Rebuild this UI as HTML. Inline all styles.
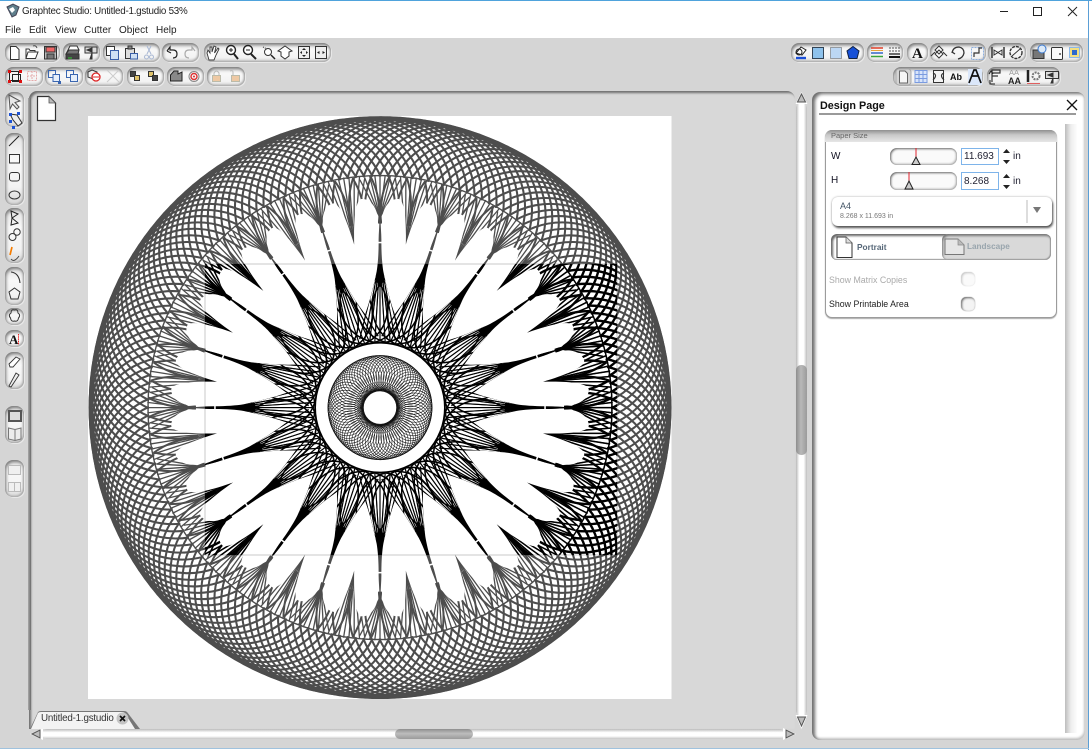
<!DOCTYPE html>
<html><head><meta charset="utf-8">
<style>
html,body{margin:0;padding:0;width:1092px;height:750px;overflow:hidden;background:#fff}
body{font-family:"Liberation Sans",sans-serif;color:#222}
#w{position:relative;width:1092px;height:750px;overflow:hidden}
svg{display:block}
.a{position:absolute}
.t{position:absolute;white-space:nowrap;line-height:1}
.p{position:absolute;border-radius:8px;background:linear-gradient(#e2e2e2,#f8f8f8 35%,#f3f3f3 75%,#d6d6d6);box-shadow:inset 1px 2px 3px #777,inset -1px -1px 2px #a8a8a8,1px 1px 0 #e8e8e8;box-sizing:border-box}
.hb{position:absolute;border-radius:6px;background:linear-gradient(90deg,#b8b8b8,#fff 30%,#fff 70%,#bdbdbd)}
</style></head><body><div id="w">
<div class="a" style="left:0;top:0;width:1092px;height:1px;background:#4fa3dc"></div>
<div class="a" style="left:0;top:38px;width:1088px;height:710px;background:#d5d5d5"></div>
<div class="a" style="left:1088px;top:0;width:1px;height:750px;background:#5b9fd6"></div>
<div class="a" style="left:0;top:748px;width:1089px;height:1px;background:#9fc2de"></div>

<div class="t" style="left:22px;top:7px;font-size:9.8px;letter-spacing:-.24px">Graphtec Studio: Untitled-1.gstudio 53%</div>
<div class="t" style="left:5px;top:26px;font-size:10px">File</div>
<div class="t" style="left:29px;top:26px;font-size:10px">Edit</div>
<div class="t" style="left:55px;top:26px;font-size:10px">View</div>
<div class="t" style="left:84px;top:26px;font-size:10px">Cutter</div>
<div class="t" style="left:119px;top:26px;font-size:10px">Object</div>
<div class="t" style="left:156px;top:26px;font-size:10px">Help</div>

<!-- toolbar pills -->
<div class="p" style="left:5px;top:43px;width:55px;height:19px"></div>
<div class="p" style="left:63px;top:43px;width:37px;height:19px"></div>
<div class="p" style="left:103px;top:43px;width:57px;height:19px"></div>
<div class="p" style="left:162px;top:43px;width:37px;height:19px"></div>
<div class="p" style="left:204px;top:43px;width:127px;height:19px"></div>
<div class="p" style="left:5px;top:67px;width:38px;height:19px"></div>
<div class="p" style="left:45px;top:67px;width:38px;height:19px"></div>
<div class="p" style="left:85px;top:67px;width:38px;height:19px"></div>
<div class="p" style="left:127px;top:67px;width:37px;height:19px"></div>
<div class="p" style="left:167px;top:67px;width:37px;height:19px"></div>
<div class="p" style="left:207px;top:67px;width:38px;height:19px"></div>
<div class="p" style="left:791px;top:43px;width:73px;height:19px"></div>
<div class="p" style="left:867px;top:43px;width:36px;height:19px"></div>
<div class="p" style="left:907px;top:43px;width:21px;height:19px"></div>
<div class="p" style="left:930px;top:43px;width:56px;height:19px"></div>
<div class="p" style="left:988px;top:43px;width:38px;height:19px"></div>
<div class="p" style="left:1030px;top:43px;width:53px;height:19px"></div>
<div class="p" style="left:893px;top:67px;width:90px;height:19px"></div>
<div class="p" style="left:987px;top:67px;width:73px;height:19px"></div>
<!-- left tool pills -->
<div class="p" style="left:5px;top:92px;width:19px;height:35px"></div>
<div class="p" style="left:5px;top:133px;width:19px;height:72px"></div>
<div class="p" style="left:5px;top:208px;width:19px;height:55px"></div>
<div class="p" style="left:5px;top:267px;width:19px;height:38px"></div>
<div class="p" style="left:5px;top:308px;width:19px;height:17px"></div>
<div class="p" style="left:5px;top:330px;width:19px;height:17px"></div>
<div class="p" style="left:5px;top:352px;width:19px;height:37px"></div>
<div class="p" style="left:5px;top:406px;width:19px;height:37px"></div>
<div class="p" style="left:5px;top:460px;width:19px;height:37px"></div>

<!-- canvas frame -->
<div class="a" style="left:29px;top:91px;width:766px;height:638px;background:#d8d8d8;border-radius:8px 8px 0 0;box-shadow:inset 2px 2px 2px #6e6e6e;"></div>
<div class="a" style="left:28px;top:98px;width:3px;height:612px;background:linear-gradient(90deg,#aaa,#6a6a6a)"></div>

<!-- spirograph page -->
<svg class="a" style="left:0;top:0" width="1092" height="750" viewBox="0 0 1092 750">
<defs>
<clipPath id="cl"><rect x="205" y="264" width="412" height="291"/></clipPath>
<path id="a1" d="M-79.75,-216.8A80 80 0 0 1 79.75,-216.8" fill="none" style="stroke-width:calc(var(--k)*2.05)"/>
<g id="a3"><use href="#a1"/><use href="#a1" transform="rotate(2)"/><use href="#a1" transform="rotate(4)"/></g>
<g id="a9"><use href="#a3"/><use href="#a3" transform="rotate(6)"/><use href="#a3" transform="rotate(12)"/></g>
<g id="a4"><use href="#a9"/><use href="#a9" transform="rotate(18)"/><use href="#a9" transform="rotate(36)"/><use href="#a9" transform="rotate(54)"/></g>
<g id="a20"><use href="#a4"/><use href="#a4" transform="rotate(72)"/><use href="#a4" transform="rotate(144)"/><use href="#a4" transform="rotate(216)"/><use href="#a4" transform="rotate(288)"/></g>

<path id="b1" d="M79.75,-216.8A80 80 0 0 1 69.3,-170.5M-69.3,-170.5A80 80 0 0 1 -79.75,-216.8" fill="none" style="stroke-width:calc(var(--k)*2)"/>
<g id="b3"><use href="#b1"/><use href="#b1" transform="rotate(4.5)"/><use href="#b1" transform="rotate(9)"/><use href="#b1" transform="rotate(13.5)"/></g>
<g id="b4"><use href="#b3"/><use href="#b3" transform="rotate(18)"/><use href="#b3" transform="rotate(36)"/><use href="#b3" transform="rotate(54)"/></g>
<g id="b20"><use href="#b4"/><use href="#b4" transform="rotate(72)"/><use href="#b4" transform="rotate(144)"/><use href="#b4" transform="rotate(216)"/><use href="#b4" transform="rotate(288)"/></g>

<line id="n" x1="0" y1="-165" x2="0" y2="-233" fill="none" style="stroke-width:calc(var(--k)*1.3)"/>
<line id="d" x1="0" y1="-190" x2="0" y2="-233" fill="none" style="stroke-width:calc(var(--k)*1.3)"/>
<line id="sp" x1="0" y1="-150" x2="0" y2="-66" style="stroke-width:1.1"/>
<g id="f1">
 <g transform="rotate(9)">
  <use href="#n" transform="rotate(-18 0 -165)"/><use href="#n" transform="rotate(-13.5 0 -165)"/><use href="#n" transform="rotate(-9 0 -165)"/><use href="#n" transform="rotate(-4.5 0 -165)"/><use href="#n"/><use href="#n" transform="rotate(4.5 0 -165)"/><use href="#n" transform="rotate(9 0 -165)"/><use href="#n" transform="rotate(13.5 0 -165)"/><use href="#n" transform="rotate(18 0 -165)"/>
 </g>
 <use href="#d" transform="rotate(-28 0 -190)"/><use href="#d" transform="rotate(-21 0 -190)"/><use href="#d" transform="rotate(-14 0 -190)"/><use href="#d" transform="rotate(-7 0 -190)"/><use href="#d"/><use href="#d" transform="rotate(7 0 -190)"/><use href="#d" transform="rotate(14 0 -190)"/><use href="#d" transform="rotate(21 0 -190)"/><use href="#d" transform="rotate(28 0 -190)"/>
</g>
<g id="f4"><use href="#f1"/><use href="#f1" transform="rotate(18)"/><use href="#f1" transform="rotate(36)"/><use href="#f1" transform="rotate(54)"/></g>
<g id="f20"><use href="#f4"/><use href="#f4" transform="rotate(72)"/><use href="#f4" transform="rotate(144)"/><use href="#f4" transform="rotate(216)"/><use href="#f4" transform="rotate(288)"/></g>

<g id="s1">
 <path d="M0,-196 L1.500,-168 L3.500,-135 L4.500,-125 L-4.500,-125 L-3.500,-135 L-1.500,-168Z" fill="currentColor" stroke="none"/>
 <use href="#sp" transform="rotate(-14 0 -150)"/><use href="#sp" transform="rotate(-10.500 0 -150)"/><use href="#sp" transform="rotate(-7 0 -150)"/><use href="#sp" transform="rotate(-3.500 0 -150)"/><use href="#sp"/><use href="#sp" transform="rotate(3.500 0 -150)"/><use href="#sp" transform="rotate(7 0 -150)"/><use href="#sp" transform="rotate(10.500 0 -150)"/><use href="#sp" transform="rotate(14 0 -150)"/>
 <circle cy="-105" r="40" fill="none" stroke-width="1.400"/>
 <circle cy="-105" r="40" fill="none" stroke-width="1.400" transform="rotate(9)"/>
</g>
<g id="s4"><use href="#s1"/><use href="#s1" transform="rotate(18)"/><use href="#s1" transform="rotate(36)"/><use href="#s1" transform="rotate(54)"/></g>
<g id="s20"><use href="#s4"/><use href="#s4" transform="rotate(72)"/><use href="#s4" transform="rotate(144)"/><use href="#s4" transform="rotate(216)"/><use href="#s4" transform="rotate(288)"/></g>

<g id="h1">
 <path transform="rotate(9)" fill="#fff" stroke="none" d="M0,-95 C6,-105 13,-122 18,-135 C21,-144 24,-158 25.700,-172 C26.500,-180 27.500,-186 27.500,-190 C27.500,-200 22,-208 15,-209 C8,-210 3,-188 0,-165 C-3,-188 -8,-210 -15,-209 C-22,-208 -27.500,-200 -27.500,-190 C-27.500,-186 -26.500,-180 -25.700,-172 C-24,-158 -21,-144 -18,-135 C-13,-122 -6,-105 0,-95Z"/>
 <rect x="-3" y="-165.800" width="6" height="1.500" fill="#fff" stroke="none"/>
</g>
<g id="h4"><use href="#h1"/><use href="#h1" transform="rotate(18)"/><use href="#h1" transform="rotate(36)"/><use href="#h1" transform="rotate(54)"/></g>
<g id="h20"><use href="#h4"/><use href="#h4" transform="rotate(72)"/><use href="#h4" transform="rotate(144)"/><use href="#h4" transform="rotate(216)"/><use href="#h4" transform="rotate(288)"/></g>

<g id="m1"><circle cy="-34.800" r="17.400" fill="none" stroke-width=".55"/><circle cy="-34.800" r="17.400" fill="none" stroke-width=".55" transform="rotate(4.500)"/><circle cy="-34.800" r="17.400" fill="none" stroke-width=".55" transform="rotate(9)"/><circle cy="-34.800" r="17.400" fill="none" stroke-width=".55" transform="rotate(13.500)"/></g>
<g id="m4"><use href="#m1"/><use href="#m1" transform="rotate(18)"/><use href="#m1" transform="rotate(36)"/><use href="#m1" transform="rotate(54)"/></g>
<g id="m20"><use href="#m4"/><use href="#m4" transform="rotate(72)"/><use href="#m4" transform="rotate(144)"/><use href="#m4" transform="rotate(216)"/><use href="#m4" transform="rotate(288)"/></g>

<g id="all" transform="translate(380 407.6)">
 <use href="#a20"/>
 <circle r="289" fill="none" stroke-width="3.500"/>
 <use href="#b20"/>
 <circle r="232" fill="none" stroke-width="1.400"/>
 <use href="#f20"/>
 <use href="#s20"/>
 <use href="#h20"/>
 <circle r="64.500" fill="#fff" stroke="#000" stroke-width="1"/>
 <g stroke="#111"><use href="#m20"/></g>
 <circle r="16.800" fill="#fff" stroke="#111" stroke-width="1"/>
</g>
</defs>
<rect x="88" y="116" width="583.500" height="583" fill="#fff"/>
<clipPath id="pg"><rect x="88" y="116" width="583.500" height="583"/></clipPath>
<g clip-path="url(#pg)">
 <g style="--k:1;color:#4d4d4d;stroke:#4d4d4d"><use href="#all"/></g>
 <g clip-path="url(#cl)" style="--k:1.150;color:#000;stroke:#000"><use href="#all"/></g>
 <rect x="205" y="264" width="412" height="291" fill="none" stroke="#c8c8c8" stroke-width="1" style="mix-blend-mode:multiply"/>
</g>
</svg>

<!-- canvas doc icon -->
<svg class="a" style="left:36px;top:95px" width="22" height="28" viewBox="0 0 22 28"><path d="M1.500 1.500H13L19.500 8V25.500H1.500Z" fill="#fff" stroke="#333" stroke-width="1.200"/><path d="M13 1.500V8H19.500Z" fill="#bbb" stroke="#555" stroke-width=".8"/></svg>

<!-- vertical scrollbar -->
<div class="hb" style="left:796px;top:103px;width:11px;height:613px"></div>
<div class="a" style="left:796px;top:365px;width:11px;height:90px;border-radius:5px;background:linear-gradient(90deg,#8e8e8e,#b9b9b9 45%,#9b9b9b)"></div>
<svg class="a" style="left:794px;top:91px" width="15" height="14" viewBox="0 0 15 14"><path d="M7.500 1L13.500 13H1.500Z" fill="#fff"/><path d="M7.500 3L11.500 11H3.500Z" fill="#bdbdbd" stroke="#555"/></svg>
<svg class="a" style="left:794px;top:714px" width="15" height="16" viewBox="0 0 15 16"><path d="M1.500 1H13.500L7.500 15Z" fill="#fff"/><path d="M3.500 3H11.500L7.500 12Z" fill="#bdbdbd" stroke="#555"/></svg>

<!-- horizontal scrollbar -->
<div class="a" style="left:42px;top:729px;width:743px;height:10px;border-radius:5px;background:linear-gradient(#bbb,#fff 35%,#fff 70%,#c4c4c4)"></div>
<div class="a" style="left:395px;top:729px;width:78px;height:10px;border-radius:5px;background:linear-gradient(#8e8e8e,#bdbdbd 45%,#9b9b9b)"></div>
<svg class="a" style="left:29px;top:727px" width="15" height="14" viewBox="0 0 15 14"><path d="M1 7L14 1V13Z" fill="#fff"/><path d="M3 7L11 3V11Z" fill="#bdbdbd" stroke="#555"/></svg>
<svg class="a" style="left:782px;top:727px" width="15" height="14" viewBox="0 0 15 14"><path d="M14 7L1 1V13Z" fill="#fff"/><path d="M12 7L4 3V11Z" fill="#bdbdbd" stroke="#555"/></svg>

<!-- tab -->
<svg class="a" style="left:28px;top:709px" width="114" height="21" viewBox="0 0 114 21"><path d="M2 20L10 3Q11 2 13 2H96Q98 2 99 3L112 20Z" fill="#777"/><path d="M3 20L10 4Q11 3 13 3H94Q96 3 97 4L107 20Z" fill="#f3f3f3"/></svg>
<div class="t" style="left:41px;top:714px;font-size:9.800px;letter-spacing:-.2px;color:#333">Untitled-1.gstudio</div>
<svg class="a" style="left:116px;top:712px" width="13" height="13" viewBox="0 0 13 13"><circle cx="6.500" cy="6.500" r="6" fill="#c4c4c4"/><path d="M4 4L9 9M9 4L4 9" stroke="#111" stroke-width="1.700"/></svg>

<!-- right panel -->
<div class="a" style="left:812px;top:92px;width:273px;height:648px;background:#fff;border-radius:8px;box-shadow:inset 3px 2px 3px #6e6e6e,inset -1px -2px 2px #c4c4c4"></div>
<div class="t" style="left:820px;top:101px;font-size:10.800px;font-weight:bold;color:#111">Design Page</div>
<svg class="a" style="left:1065px;top:98px" width="14" height="14" viewBox="0 0 14 14"><path d="M2 2L12 12M12 2L2 12" stroke="#111" stroke-width="1.300"/></svg>
<div class="a" style="left:819px;top:113px;width:257px;height:2px;background:#9a9a9a"></div>
<div class="a" style="left:1065px;top:124px;width:12px;height:609px;background:linear-gradient(90deg,#bdbdbd,#eee 50%,#fdfdfd)"></div>

<!-- paper size group -->
<div class="a" style="left:825px;top:130px;width:232px;height:188px;border-radius:7px;border:1px solid #9c9c9c;box-sizing:border-box;background:#fff;box-shadow:0 1px 1px #aaa"></div>
<div class="a" style="left:825px;top:130px;width:232px;height:12px;border-radius:7px 7px 0 0;background:linear-gradient(#8f8f8f,#c8c8c8 40%,#e6e6e6)"></div>
<div class="t" style="left:831px;top:132px;font-size:7.500px;color:#666">Paper Size</div>

<div class="t" style="left:831px;top:152px;font-size:10px;color:#112">W</div>
<div class="t" style="left:831px;top:176px;font-size:10px;color:#112">H</div>
<div class="a" style="left:890px;top:148px;width:67px;height:17px;border-radius:7px;background:#fafafa;box-shadow:inset 1px 1px 2px #666,inset -1px -1px 2px #aaa"></div>
<div class="a" style="left:890px;top:172px;width:67px;height:18px;border-radius:7px;background:#fafafa;box-shadow:inset 1px 1px 2px #666,inset -1px -1px 2px #aaa"></div>
<svg class="a" style="left:890px;top:146px" width="70" height="46" viewBox="0 0 70 46">
<path d="M26 2V14" stroke="#e0242e"/><path d="M26 11L30 18.500H22Z" fill="#ccc" stroke="#222"/>
<path d="M19 26V38" stroke="#e0242e"/><path d="M19 35L23 43H15Z" fill="#ccc" stroke="#222"/></svg>
<div class="a" style="left:961px;top:148px;width:38px;height:17px;border:1px solid #7eb4ea;box-sizing:border-box;background:#fff"></div>
<div class="a" style="left:961px;top:172px;width:38px;height:18px;border:1px solid #7eb4ea;box-sizing:border-box;background:#fff"></div>
<div class="t" style="left:964px;top:152px;font-size:10px;color:#223">11.693</div>
<div class="t" style="left:964px;top:177px;font-size:10px;color:#223">8.268</div>
<svg class="a" style="left:1002px;top:148px" width="9" height="44" viewBox="0 0 9 44"><path d="M4.500 1L8 5H1ZM4.500 16L8 12H1ZM4.500 26L8 30H1ZM4.500 41L8 37H1Z" fill="#222"/></svg>
<div class="t" style="left:1013px;top:152px;font-size:10px;color:#223">in</div>
<div class="t" style="left:1013px;top:177px;font-size:10px;color:#223">in</div>

<div class="a" style="left:832px;top:197px;width:220px;height:29px;border-radius:6px;background:#fff;box-shadow:1px 2px 2px #555,0 0 2px #aaa"></div>
<div class="t" style="left:840px;top:202px;font-size:9px;color:#456">A4</div>
<div class="t" style="left:840px;top:213px;font-size:7px;color:#777">8.268 x 11.693 in</div>
<div class="a" style="left:1026px;top:200px;width:2px;height:23px;background:#ddd"></div>
<svg class="a" style="left:1032px;top:206px" width="10" height="8" viewBox="0 0 10 8"><path d="M1 1H9L5 7Z" fill="#777"/></svg>

<div class="a" style="left:831px;top:234px;width:220px;height:26px;border-radius:6px;background:#fff;box-shadow:inset 2px 2px 2px #666,inset -1px -1px 1px #999"></div>
<div class="a" style="left:942px;top:234px;width:109px;height:26px;border-radius:6px;background:#d9d9d9;box-shadow:inset 1px 2px 2px #777,inset -1px -1px 1px #999"></div>
<svg class="a" style="left:836px;top:236px" width="18" height="23" viewBox="0 0 18 23"><path d="M1 1H10L16 7V21.500H1Z" fill="#fff" stroke="#333"/><path d="M10 1V7H16" fill="#ddd" stroke="#555" stroke-width=".7"/></svg>
<svg class="a" style="left:944px;top:238px" width="22" height="18" viewBox="0 0 22 18"><path d="M1 1H14L20 7V16.500H1Z" fill="#e6e6e6" stroke="#777"/><path d="M14 1V7H20" fill="#bbb" stroke="#888" stroke-width=".7"/></svg>
<div class="t" style="left:857px;top:243px;font-size:8.300px;font-weight:bold;color:#567">Portrait</div>
<div class="t" style="left:967px;top:243px;font-size:8.200px;font-weight:bold;color:#99a5ad">Landscape</div>

<div class="t" style="left:829px;top:276px;font-size:8.800px;color:#aaa">Show Matrix Copies</div>
<div class="t" style="left:829px;top:300px;font-size:8.800px;color:#222">Show Printable Area</div>
<div class="a" style="left:961px;top:272px;width:14px;height:14px;border-radius:5px;background:#fafafa;box-shadow:inset 1px 1px 2px #c4c4c4,0 0 1px #ccc"></div>
<div class="a" style="left:961px;top:297px;width:14px;height:14px;border-radius:5px;background:#f4f4f4;box-shadow:inset 1px 1px 2px #666,0 0 1px #888"></div>

<!-- window controls + all icons -->
<svg class="a" style="left:0;top:0" width="1092" height="750" viewBox="0 0 1092 750" fill="none" stroke="#333" stroke-width="1" font-family="Liberation Serif,serif">
<path d="M1000 11.500H1008" stroke="#222"/><rect x="1033.500" y="7.500" width="8" height="8" stroke="#222"/><path d="M1068 7L1077 16M1077 7L1068 16" stroke="#222"/>
<!-- app icon -->
<path d="M7 7L13 4L19 7L16 15L12 17Z" fill="#5f7f8c" stroke="#445"/><path d="M9 9L13 7L15 10L12 13Z" fill="#fff" stroke="none"/>

<!-- row 1 left -->
<path d="M10.500 46.500H16L19 49.500V59.500H10.500Z" fill="#fff"/>
<path d="M26 58.500V49H29L30 50.500H35V52M26 58.500L28 52H38L35.500 58.500Z" fill="#fff"/><path d="M33 46Q36 45 37 48" stroke-width=".8"/>
<rect x="44.500" y="46.500" width="12" height="12.500" fill="#bbb"/><rect x="46" y="47" width="9" height="5" fill="#e66"/><rect x="47" y="54" width="7" height="5" fill="#777"/>
<path d="M66 54L70 46H77L79 50" fill="#fff"/><path d="M66 54H78L79 50H69Z" fill="#777"/><rect x="66" y="54" width="13" height="5" fill="#444"/><path d="M68 58H72" stroke="#3c3"/>
<rect x="85" y="47" width="12" height="6" fill="#ddd"/><path d="M87 50L92 48V52ZM92 53V59H90Z" fill="#333"/>
<rect x="106.500" y="46.500" width="8" height="9" fill="#fff"/><rect x="110.500" y="50.500" width="8" height="9" fill="#cfe0f4" stroke="#3a5fa8"/>
<rect x="125.500" y="48.500" width="9" height="10" fill="#ddd"/><rect x="128" y="46" width="4" height="3" fill="#888"/><rect x="130.500" y="53.500" width="7" height="5.500" fill="#cfe0f4" stroke="#3a5fa8"/>
<path d="M147 46L151 54M151 46L147 54" stroke="#a9b8d4"/><circle cx="146.500" cy="57" r="2" stroke="#a9b8d4"/><circle cx="151.500" cy="57" r="2" stroke="#a9b8d4"/>
<path d="M167 51L170 47V50H173Q177 50 177 54T173 58" stroke="#222" stroke-width="1.200"/><path d="M167 51L171 53" stroke="#222"/>
<path d="M195 51L192 47V50H189Q185 50 185 54T189 58" stroke="#aaa" stroke-width="1.200"/>
<path d="M209 60L207 53L208 50L210 53L210 47L212 47V52L214 46L216 47L214.500 53L218 48L219 49L216 55L214 60Z" fill="#fff" stroke-width=".9"/>
<circle cx="231" cy="50" r="4.500" fill="#fff" stroke="#222" stroke-width="1.400"/><path d="M234 54L238 59" stroke="#222" stroke-width="2"/><path d="M229 50H233M231 48V52" stroke="#222"/>
<circle cx="248" cy="50" r="4.500" fill="#fff" stroke="#222" stroke-width="1.400"/><path d="M251 54L256 59" stroke="#222" stroke-width="2"/><path d="M246 50H250" stroke="#222"/>
<circle cx="268" cy="52" r="3.500" fill="#fff" stroke="#333"/><path d="M271 55L275 59" stroke="#222" stroke-width="1.500"/><path d="M263 47L267 49" stroke-dasharray="1 1"/>
<path d="M285 46L292 51L289 52V56L285 59L281 56V52L278 51Z" fill="#fff"/>
<rect x="298.500" y="46.500" width="11" height="12" fill="#eee"/><path d="M304 48L306 50H302ZM304 57L306 55H302ZM300 52.500L302 51V54ZM308 52.500L306 51V54Z" fill="#222" stroke="none"/>
<rect x="315.500" y="46.500" width="11" height="12" fill="#eee"/><path d="M317 52.500L319.500 51V54ZM325 52.500L322.500 51V54Z" fill="#222" stroke="none"/>

<!-- row 2 left -->
<rect x="9.500" y="71.500" width="9" height="9" stroke="#222"/><rect x="12.500" y="74.500" width="8" height="7" stroke="#222"/><path d="M8 70h3v3h-3zM19 70h3v3h-3zM8 80h3v3h-3zM19 80h3v3h-3z" fill="#d11" stroke="none"/>
<rect x="27.500" y="71.500" width="9" height="9" stroke="#e4a9a9" stroke-dasharray="2 1"/><path d="M32 71V81M27 76H37" stroke="#e4a9a9" stroke-dasharray="2 1"/>
<path d="M48.500 70.500H55.500V77.500H48.500Z" stroke="#3a66b0"/><path d="M53 74.500H59.500V81.500H53Z" stroke="#3a66b0" fill="#e7effa"/><path d="M58 81h3v3h-3z" fill="#3a66b0" stroke="none"/>
<rect x="66.500" y="70.500" width="7" height="7" stroke="#3a66b0"/><rect x="70.500" y="74.500" width="7" height="7" stroke="#3a66b0" fill="#e7effa"/>
<path d="M88 72L92 70L97 72V77L93 79L88 77Z" fill="#eee"/><circle cx="96" cy="77" r="4" fill="#fff" stroke="#d22" stroke-width="1.300"/><path d="M93 77H99" stroke="#d22"/>
<path d="M107 70L119 82M119 70L107 82" stroke="#ccc"/>
<rect x="130.500" y="71.500" width="5" height="5" fill="#444"/><rect x="134.500" y="75.500" width="5" height="5" fill="#dfc36b"/>
<rect x="148.500" y="71.500" width="5" height="5" fill="#dfc36b"/><rect x="152.500" y="75.500" width="5" height="5" fill="#444"/>
<path d="M170.500 81V75L174 71H178V74L182 72V81Z" fill="#888" stroke="#222"/>
<circle cx="194" cy="76.500" r="5" stroke="#888"/><circle cx="194" cy="76.500" r="3" stroke="#d33" stroke-width="1.400"/><circle cx="194" cy="76.500" r="1" fill="#d33" stroke="none"/>
<rect x="212.500" y="75.500" width="8" height="6" fill="#eec9a4" stroke="#bba"/><path d="M214 75V73Q216.500 69 219 73V75" stroke="#bbb"/>
<rect x="231.500" y="75.500" width="8" height="6" fill="#eec9a4" stroke="#bba"/><path d="M233 75V72Q233 70 230 71" stroke="#bbb"/>

<!-- row 1 right -->
<path d="M796 53L801 47L806 50L802 55Z" fill="#fff" stroke="#222"/><path d="M796 58H806" stroke="#1a4fd8" stroke-width="2.400"/><circle cx="799" cy="52" r="3" stroke="#222"/>
<rect x="812.500" y="47.500" width="11" height="11" fill="#8ec2ec" stroke="#345"/>
<rect x="830.500" y="47.500" width="11" height="11" fill="#bcd7f4" stroke="#555" stroke-dasharray="1 1"/>
<path d="M853 46.500L859 51L857 58.500H849L847 51Z" fill="#1650d8" stroke="#124"/>
<path d="M871 48H883" stroke="#e0402a" stroke-width="1.500"/><path d="M871 50.500H883" stroke="#e6a33a" stroke-width="1"/><path d="M871 53H883" stroke="#3466c8" stroke-width="1.500"/><path d="M871 56.500H883" stroke="#3aa53a" stroke-width="1.500"/>
<path d="M889 48H900M889 51H900" stroke="#555" stroke-dasharray="2 1"/><path d="M889 54H900" stroke="#222" stroke-width="1.300"/><path d="M889 57H900" stroke="#111" stroke-width="2"/>
<text x="912" y="58" font-size="15" font-weight="bold" fill="#111" stroke="none">A</text>
<path d="M939 46L943 50L939 54L935 50ZM939 50L943 54L939 58L935 54ZM935 52L931 56M943 52L947 56" fill="#fff"/>
<path d="M952 53Q953 47 959 47Q964 48 964 53Q963 58 958 59M952 52L955 54" stroke-width="1.300"/>
<rect x="971.500" y="47.500" width="12" height="12" stroke="#8eb0e0" stroke-dasharray="2 1"/><path d="M974 57L974 53H979V48H982" stroke-width="1.200"/>
<path d="M992 47V58M1004 47V58" stroke-width="1.500"/><path d="M994 50L998 52.500L994 55ZM1002 50L998 52.500L1002 55Z"/>
<circle cx="1016" cy="52.500" r="6" stroke-dasharray="3 1" stroke-width="1.400"/><path d="M1012 56L1020 49"/>
<path d="M1033 58.500V50H1044V58.500Z" fill="#777"/><circle cx="1042" cy="49" r="4" fill="#dbe9f8" stroke="#3b79cf"/>
<rect x="1051.500" y="47.500" width="11" height="12" rx="1" fill="#fafafa"/><path d="M1059 54H1061" stroke-width="1.300"/>
<rect x="1069.500" y="47.500" width="10" height="10" fill="#f2de80" stroke="#8cb8e6"/><rect x="1072" y="50" width="5" height="5" fill="#2c68cc" stroke="none"/>

<!-- row 2 right -->
<rect x="896" y="69" width="15" height="16" rx="3" fill="#d4d4d4" stroke="#aaa"/><path d="M899.500 71H905L907.500 73.500V83H899.500Z" fill="#f6f6f6" stroke="#666"/>
<rect x="915" y="70.500" width="12" height="12" fill="#d8e4fa" stroke="#7a9be0"/><path d="M915 74.500H927M915 78.500H927M919 70.500V82.500M923 70.500V82.500" stroke="#7a9be0"/>
<rect x="933.500" y="70.500" width="10" height="12" fill="#f4f4f4"/><path d="M933 73Q938 75 933 80M944 73Q939 75 944 80" stroke-width="1.200"/>
<text x="950" y="80" font-size="9" font-weight="bold" fill="#111" stroke="none" font-family="Liberation Sans,sans-serif">Ab</text>
<rect x="968" y="69" width="14" height="16" fill="#dbe7fa" stroke="none"/><path d="M969 83L974 70H976L981 83M972 76H978" stroke="#111" stroke-width="1.700"/>
<path d="M992 73H1000V70H992V82M992 76H998" stroke-width="1.200"/><path d="M989 74L991 71L993 74M990 80V84H995" stroke="#222"/>
<text x="1009" y="75" font-size="7.500" fill="#999" stroke="none" font-family="Liberation Sans,sans-serif">AA</text>
<text x="1008" y="84" font-size="9" font-weight="bold" fill="#222" stroke="none" font-family="Liberation Sans,sans-serif">AA</text>
<path d="M1028 70V82" stroke="#222" stroke-width="2.500"/><circle cx="1036" cy="76" r="3.500" stroke-width="2" stroke="#777" stroke-dasharray="2 1"/><path d="M1027 83.500H1040" stroke="#e06060"/>
<rect x="1045.500" y="71.500" width="13" height="7" fill="#ddd"/><path d="M1048 75L1053 73V77ZM1053 78V83H1051Z" fill="#333"/>

<!-- left tools -->
<path d="M9 95L20 101L15 102.500L19 107L17 109L12.500 104L10 109Z" fill="#e8e8e8" stroke="#555"/>
<path d="M10 114L17 115L22 123L18 126L13 120Z" fill="#eee" stroke="#333"/><path d="M9 113h3v3h-3zM17 112h3v3h-3zM9 120h3v3h-3zM12 126h3v3h-3z" fill="#1c52d6" stroke="none"/>
<path d="M9 146L19 136" stroke="#222"/>
<rect x="9.500" y="154.500" width="10" height="8.500"/>
<rect x="9.500" y="172.500" width="10" height="8.500" rx="2.500"/>
<ellipse cx="14.500" cy="195" rx="5.500" ry="4"/>
<path d="M11 211L18 214L12 218ZM12 218L18 223L11 225Z" stroke="#222"/>
<circle cx="17" cy="232" r="3.200"/><circle cx="12.500" cy="237" r="3.500"/>
<path d="M12 247L10 255" stroke="#f57c00" stroke-width="1.700"/><path d="M11 259Q14 263 19 256" stroke="#444"/>
<path d="M11 272Q19 273 20 283" stroke="#333" stroke-width="1.100"/>
<path d="M14.500 288L20 292L18 299H11L9 292Z"/>
<path d="M14.500 310Q18 309 18 313Q21 315 18.500 318Q18 322 14.500 321Q11 322 10.500 318Q8 315 11 313Q11 309 14.500 310Z"/>
<text x="9" y="344" font-size="13" font-weight="bold" fill="#111" stroke="none">A</text><path d="M18.500 334V345" stroke="#e22" stroke-dasharray="1.500 .7"/>
<path d="M9 364L16 357L20 359L13 367L10 367Z" fill="#fff" stroke-width=".9"/>
<path d="M9 386L16 373L19 375L11 387Z" fill="#eee" stroke-width=".9"/>
<rect x="9" y="411" width="12" height="10" fill="#ddd" stroke="#555" stroke-width="2"/>
<path d="M8.500 428L15 429.500L21 428V439L15 440.500L8.500 439ZM15 429.500V440" fill="#ececec" stroke="#777"/>
<rect x="8.500" y="465.500" width="12" height="9" fill="#f0f0f0" stroke="#bbb"/>
<rect x="8.500" y="482.500" width="12" height="9" fill="#f0f0f0" stroke="#bbb"/><path d="M14.500 482V492" stroke="#bbb"/>
</svg>
</div></body></html>
